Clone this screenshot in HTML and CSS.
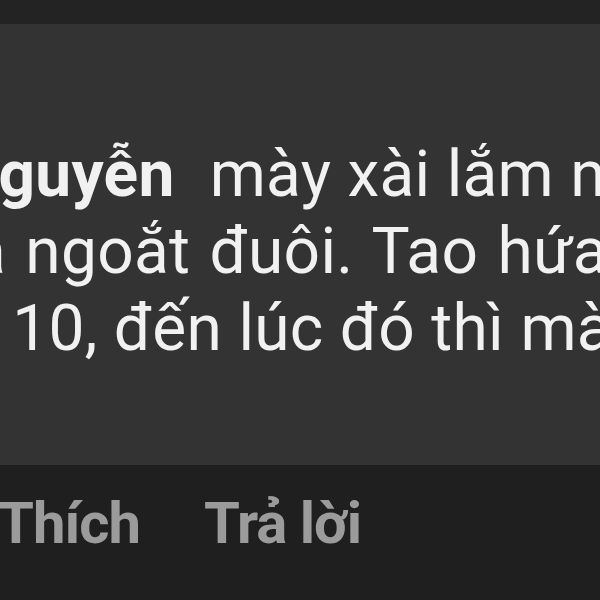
FILE: index.html
```html
<!DOCTYPE html>
<html lang="vi">
<head>
  <meta charset="UTF-8">
  <meta name="viewport" content="width=device-width, initial-scale=1.0">
  <title>Bình luận</title>
  <link rel="stylesheet" href="styles.css">
</head>
<body>
  <div class="topbar"></div>

  <div class="comment">
    <div class="comment-body">
      <p class="line line-first"><span class="author">Nguyễn</span>mày xài lắm nha, rồi</p>
      <p class="line line-second">a ngoắt đuôi. Tao hứa với mày</p>
      <p class="line line-third">&nbsp;10, đến lúc đó thì mày biết</p>
    </div>
  </div>

  <div class="actions">
    <span class="action">Thích</span>
    <span class="action">Trả lời</span>
  </div>
</body>
</html>
```

FILE: styles.css
```css
* {
  margin: 0;
  padding: 0;
  box-sizing: border-box;
  font-family: Roboto, "Noto Sans", Arial, sans-serif;
}

body {
  width: 600px;
  height: 600px;
  overflow: hidden;
  background: #1f1f1f;
}

.topbar {
  height: 24px;
  background: #232323;
}

.comment {
  background: #333333;
  height: 441px;
  padding-top: 112px;
  overflow: hidden;
}

.comment-body {
  color: #f1f1f1;
  font-size: 64px;
  line-height: 77px;
  letter-spacing: 0.3px;
}

.line {
  white-space: nowrap;
}

.line-first {
  margin-left: -47px;
}

.line-second {
  margin-left: -29px;
  word-spacing: 3px;
}

.line-third {
  margin-left: -4px;
}

.author {
  font-weight: bold;
  margin-right: 35px;
}

.actions {
  display: flex;
  gap: 64px;
  padding-top: 20px;
  margin-left: -2px;
  font-size: 58px;
  line-height: 77px;
  letter-spacing: -1px;
  font-weight: bold;
  color: #9b9b9b;
  white-space: nowrap;
}
```
